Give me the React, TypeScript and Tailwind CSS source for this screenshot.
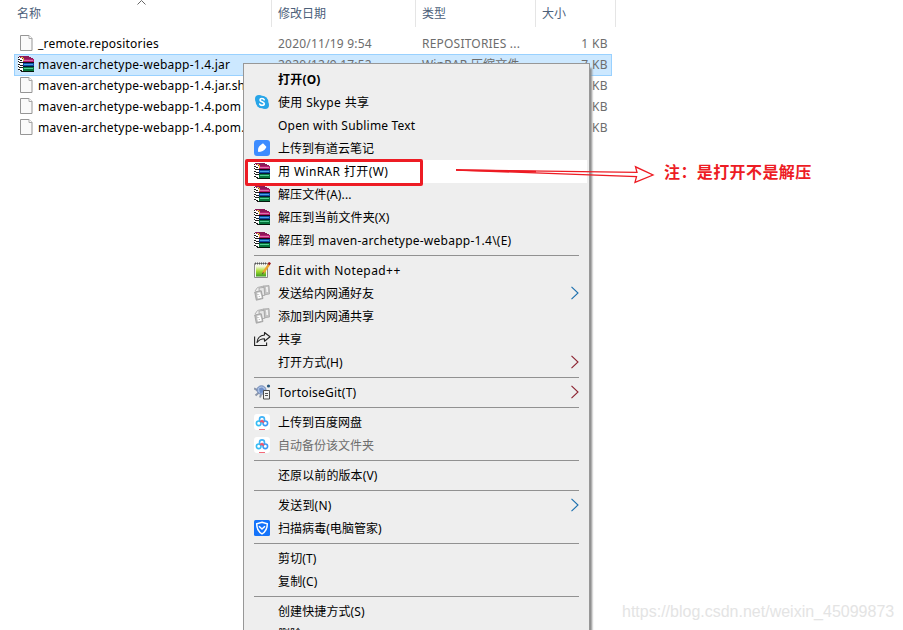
import { ReactNode } from "react";

type IconName =
  | "skype"
  | "youdao"
  | "rar"
  | "notepad"
  | "nwt"
  | "share"
  | "tortoise"
  | "baidu"
  | "guard";

type MenuEntry = {
  label: string;
  icon?: IconName;
  bold?: boolean;
  active?: boolean;
  disabled?: boolean;
  arrow?: "blue" | "red";
  spacing?: string;
};

const files = [
  { name: "_remote.repositories", date: "2020/11/19 9:54", type: "REPOSITORIES ...", size: "1 KB" },
  { name: "maven-archetype-webapp-1.4.jar", date: "2020/12/9 17:52", type: "WinRAR 压缩文件", size: "7 KB", selected: true },
  { name: "maven-archetype-webapp-1.4.jar.sha1", date: "", type: "", size: "1 KB" },
  { name: "maven-archetype-webapp-1.4.pom", date: "", type: "", size: "1 KB" },
  { name: "maven-archetype-webapp-1.4.pom.sha1", date: "", type: "", size: "1 KB" },
];

const menuGroups: MenuEntry[][] = [
  [
    { label: "打开(O)", bold: true, spacing: "tracking-[0.2px]" },
    { label: "使用 Skype 共享", icon: "skype", spacing: "tracking-[0.35px]" },
    { label: "Open with Sublime Text", spacing: "tracking-[0.19px]" },
    { label: "上传到有道云笔记", icon: "youdao" },
    { label: "用 WinRAR 打开(W)", icon: "rar", active: true, spacing: "tracking-[0.38px]" },
    { label: "解压文件(A)...", icon: "rar", spacing: "tracking-[0.1px]" },
    { label: "解压到当前文件夹(X)", icon: "rar", spacing: "tracking-[0.1px]" },
    { label: "解压到 maven-archetype-webapp-1.4\\(E)", icon: "rar", spacing: "tracking-[0.24px]" },
  ],
  [
    { label: "Edit with Notepad++", icon: "notepad", spacing: "tracking-[0.42px]" },
    { label: "发送给内网通好友", icon: "nwt", arrow: "blue" },
    { label: "添加到内网通共享", icon: "nwt" },
    { label: "共享", icon: "share" },
    { label: "打开方式(H)", arrow: "red", spacing: "tracking-[0.1px]" },
  ],
  [{ label: "TortoiseGit(T)", icon: "tortoise", arrow: "red", spacing: "tracking-[0.22px]" }],
  [
    { label: "上传到百度网盘", icon: "baidu" },
    { label: "自动备份该文件夹", icon: "baidu", disabled: true },
  ],
  [{ label: "还原以前的版本(V)", spacing: "tracking-[0.1px]" }],
  [
    { label: "发送到(N)", arrow: "blue", spacing: "tracking-[0.2px]" },
    { label: "扫描病毒(电脑管家)", icon: "guard", spacing: "tracking-[0.05px]" },
  ],
  [
    { label: "剪切(T)", spacing: "tracking-[0.15px]" },
    { label: "复制(C)", spacing: "tracking-[0.15px]" },
  ],
  [
    { label: "创建快捷方式(S)", spacing: "tracking-[0.1px]" },
    { label: "删除(D)" },
  ],
];

function RarIcon() {
  return (
    <svg width="16" height="16" viewBox="0 0 16 16" shapeRendering="crispEdges">
      {/* page edges of the three books */}
      <path d="M0 1h3v1h2v14H3v-1H1v-1H0z" fill="#fff" />
      <path
        d="M0 1h1v1H0zM0 3h2v1H0zM2 4h2v1H2zM0 5h1v1H0zM1 6h2v1H1zM3 6h2v1H3zM0 8h2v1H0zM2 9h3v1H2zM0 10h1v1H0zM1 11h2v1H1zM3 11h2v1H3zM0 13h2v1H0zM2 14h2v1H2zM3 15h2v1H3z"
        fill="#1c1c1c"
      />
      {/* covers */}
      <path d="M1 0h10v1h2v1h2v1H4V2H2V1H1z" fill="#8e1a58" />
      <path d="M5 3h11v3H5z" fill="#b61c70" />
      <path d="M6 4h9v1H6z" fill="#dc74a9" />
      <path d="M5 6h11v1H5z" fill="#1a0712" />
      <path d="M5 7h11v3H5z" fill="#0d4ca4" />
      <path d="M6 8h9v1H6z" fill="#45a4e6" />
      <path d="M5 10h11v1H5z" fill="#061735" />
      <path d="M5 11h11v4H5z" fill="#06763c" />
      <path d="M6 12h9v1H6z" fill="#55cf96" />
      <path d="M5 15h11v1H5z" fill="#04170b" />
      <path d="M3 1h2v1H3zM5 2h1v3H5z" fill="#e8c53c" />
    </svg>
  );
}

function FileIcon() {
  return (
    <svg width="13" height="17" viewBox="0 0 13 17">
      <path d="M.5 .5h8.500l3 3v12H.5z" fill="#fafafa" stroke="#969696" />
      <path d="M9 .5v3h3" fill="#fff" stroke="#a8a8a8" />
    </svg>
  );
}

function MenuIcon({ name }: { name: IconName }) {
  const drawings: Record<IconName, ReactNode> = {
    rar: <RarIcon />,
    skype: (
      <svg width="16" height="16" viewBox="0 0 16 16">
        <circle cx="8" cy="8" r="6.300" fill="#27a5e8" />
        <circle cx="5" cy="5" r="4" fill="#27a5e8" />
        <circle cx="11" cy="11" r="4" fill="#27a5e8" />
        <path d="M10.200 5.700C9.600 4.200 6 4.100 6 6c0 2 4.300 1.600 4.300 3.800 0 2-4 2-4.600.2" fill="none" stroke="#fff" strokeWidth="1.600" strokeLinecap="round" />
      </svg>
    ),
    youdao: (
      <svg width="16" height="16" viewBox="0 0 16 16">
        <rect width="16" height="16" rx="3" fill="#3d8cff" />
        <path d="M4.200 12c-.5-2.500 0-4.500 1.600-6.200L8.300 3.800c.5-.3.900-.3 1.200 0l2.600 2.700c.3.400.3.700 0 1.200-1.900 2.900-4.400 4.200-7.900 4.300z" fill="#fff" />
      </svg>
    ),
    notepad: (
      <svg width="17" height="16" viewBox="0 0 17 16">
        <defs>
          <linearGradient id="page" x1="0" y1="0" x2="0" y2="1">
            <stop offset=".1" stopColor="#f2f7d8" />
            <stop offset=".5" stopColor="#a9dd32" />
            <stop offset="1" stopColor="#3e9c22" />
          </linearGradient>
        </defs>
        <path d="M.5 1.500h13v14H.5z" fill="#f7f7f3" stroke="#8b8b8b" />
        <path d="M2 3.500h10v11H2z" fill="url(#page)" />
        <path d="M1 1.500h12" stroke="#555" strokeWidth="2" strokeDasharray="1 1" />
        <path d="M15 2.500L9 11" stroke="#eda42d" strokeWidth="2.200" />
        <path d="M9.300 10.300l-.8 1.900" stroke="#444" />
        <path d="M16 .5l-1.400 2.200" stroke="#9c1c20" strokeWidth="2.500" />
      </svg>
    ),
    nwt: (
      <svg width="16" height="16" viewBox="0 0 16 16">
        <path d="M9.500 1l5.500-.4.500 8.400-5 .8z" fill="#c4c4c4" stroke="#a6a6a6" strokeWidth=".8" />
        <path d="M5 3l5-.7.800 8-5.300.9z" fill="#e6e6e6" stroke="#a0a0a0" strokeWidth=".8" />
        <path d="M.7 7l6.500-1.300L9 13.500l-6.700 1.700z" fill="#bdbdbd" stroke="#999" strokeWidth=".8" />
        <path d="M3.300 8.500l2.500-.5.400 2-2.300.6.500 2.200 2.500-.6-.5-2.300M12 3l1-.3.200 4.300" fill="none" stroke="#fff" strokeWidth="1.300" />
        <path d="M1 6l2.500-3.500L10 1" fill="none" stroke="#b0b0b0" />
      </svg>
    ),
    share: (
      <svg width="17" height="16" viewBox="0 0 17 16">
        <path d="M.6 5.500v9h12v-3" fill="none" stroke="#222" strokeWidth="1.100" />
        <path d="M10.500 1.500l5.500 4.300-5.500 4.400V7.800C7 7.800 5 9 3 11.500c.3-4 3-7 7.500-7.500z" fill="none" stroke="#222" strokeWidth="1.100" strokeLinejoin="round" />
      </svg>
    ),
    tortoise: (
      <svg width="17" height="16" viewBox="0 0 17 16">
        <path d="M0 4.500l4 2M1.500 11.500l3.500-3M6 13.500l1-3" stroke="#8c97aa" strokeWidth="2" />
        <ellipse cx="7.500" cy="6" rx="4.500" ry="4.200" fill="#a9bfe2" stroke="#6f87b5" />
        <path d="M5 4.500l3-1 2.500 2-1 3-3.500.5z" fill="#6f8fc8" />
        <circle cx="14.500" cy="2" r="1.600" fill="#28587c" />
        <path d="M9.500 6.500h6v8.500h-6z" fill="#f2f2f2" stroke="#4c4c4c" />
        <path d="M11 9.500h3M11 11.500h3" stroke="#555" />
      </svg>
    ),
    baidu: (
      <svg width="16" height="16" viewBox="0 0 16 16">
        <rect width="16" height="16" rx="3" fill="#fff" />
        <circle cx="8" cy="5.400" r="2.500" fill="none" stroke="#3fb2f7" strokeWidth="1.600" />
        <circle cx="4.700" cy="9.300" r="2.300" fill="none" stroke="#35bdf5" strokeWidth="1.600" />
        <circle cx="11.300" cy="9.300" r="2.300" fill="none" stroke="#3b9af6" strokeWidth="1.600" />
        <path d="M6.200 8L8 6.700 9.900 8.500" fill="none" stroke="#f2566d" strokeWidth="1.900" />
        <path d="M5 15.500h6" stroke="#f46a7a" />
      </svg>
    ),
    guard: (
      <svg width="16" height="16" viewBox="0 0 16 16">
        <rect width="16" height="16" rx="1.500" fill="#1473fa" />
        <path d="M8 2.200l5.300 1.600c0 5-1 7.800-5.300 10-4.300-2.200-5.300-5-5.300-10z" fill="none" stroke="#fff" strokeWidth="1.500" />
        <path d="M5 6.200l3 2.800 3-2.800" fill="none" stroke="#fff" strokeWidth="1.500" />
      </svg>
    ),
  };

  return drawings[name];
}

function MenuRow({ entry }: { entry: MenuEntry }) {
  return (
    <div
      className={`flex h-[23px] items-center pr-2 pl-2 ${entry.active ? "bg-white" : ""} ${
        entry.disabled ? "text-[#6d6d6d]" : "text-black"
      }`}
    >
      <span className="flex w-6 shrink-0 pb-px">{entry.icon && <MenuIcon name={entry.icon} />}</span>
      <span className={`flex-1 ${entry.bold ? "font-bold" : ""} ${entry.spacing ?? ""}`}>
        {entry.label}
      </span>
      {entry.arrow && (
        <svg width="9" height="14" viewBox="0 0 9 14" className="mb-[2px]">
          <path
            d="M1.500 .8L8 7l-6.500 6.200"
            fill="none"
            stroke={entry.arrow === "blue" ? "#1a6fae" : "#8c2330"}
            strokeWidth="1.100"
          />
        </svg>
      )}
    </div>
  );
}

function ContextMenu() {
  return (
    <div className="absolute top-[63px] left-[243px] w-[347px] border border-[#979797] bg-[#eeeeee] px-0.5 py-1 shadow-[3px_4px_2px_-1px_#8a8a8a]">
      {menuGroups.map((group, index) => (
        <div key={index}>
          {index > 0 && <div className="mx-2 my-[3px] h-px bg-[#919191]" />}
          {group.map((entry) => (
            <MenuRow key={entry.label} entry={entry} />
          ))}
        </div>
      ))}
    </div>
  );
}

function FileList() {
  return (
    <div className="w-[616px]">
      <div className="flex h-[27px] text-[#4c607a]">
        <div className="relative w-[272px] border-r border-[#e5e5e5] pt-[5px] pl-[17px]">
          名称
          <svg width="10" height="6" viewBox="0 0 10 6" className="absolute top-0 left-[137px]">
            <path d="M.5 4.500L4.500.5l4 4" fill="none" stroke="#666" />
          </svg>
        </div>
        <div className="w-36 border-r border-[#e5e5e5] pt-[5px] pl-1.5">修改日期</div>
        <div className="w-[120px] border-r border-[#e5e5e5] pt-[5px] pl-1.5">类型</div>
        <div className="w-20 border-r border-[#e5e5e5] pt-[5px] pl-1.5">大小</div>
      </div>

      <div className="mt-1.5 mr-1 ml-3.5">
        {files.map((file) => (
          <div
            key={file.name}
            className={`flex items-center tracking-[0.21px] ${
              file.selected
                ? "-mb-px h-[22px] bg-[#cce8ff] pb-px outline outline-[#99d1ff] -outline-offset-1"
                : "h-[21px]"
            }`}
          >
            <span className="flex w-6 shrink-0 justify-center pb-px">
              {file.selected ? <RarIcon /> : <FileIcon />}
            </span>
            <span className="w-60 shrink-0 text-black">{file.name}</span>
            <span className="w-36 shrink-0 text-[#6d6d6d]">{file.date}</span>
            <span className="w-[110px] shrink-0 text-[#6d6d6d]">{file.type}</span>
            <span className="flex-1 pr-1 text-right tracking-[0.4px] text-[#6d6d6d]">{file.size}</span>
          </div>
        ))}
      </div>
    </div>
  );
}

export default function App() {
  return (
    <div className="relative h-[630px] w-[903px] overflow-hidden bg-white font-['Noto_Sans','Noto_Sans_CJK_SC',sans-serif] text-[12px] leading-[18px] whitespace-nowrap">
      <FileList />
      <ContextMenu />
      <div className="absolute top-[159px] left-[245px] h-[27px] w-[178px] rounded-[2px] border-3 border-[#ed1c24]" />
      <svg width="202" height="24" viewBox="0 0 202 24" className="absolute top-[162px] left-[454px]">
        <path
          d="M2 8l181 2.300-1.500-5.500 17.500 8.200-18 7.300 1.500-5.600z"
          fill="none"
          stroke="#ed1c24"
          strokeWidth="1.300"
        />
        <path d="M2 8l80 1.600" stroke="#ed1c24" strokeWidth="1.600" />
      </svg>
      <p className="absolute top-[160px] left-[664px] text-[16px] leading-6 font-bold tracking-[0.4px] text-[#ed1c24]">
        注：是打开不是解压
      </p>
      <p className="absolute top-[602px] left-[622px] font-['Liberation_Sans',sans-serif] text-[16px] leading-5 text-[#e4e4e4]">
        https://blog.csdn.net/weixin_45099873
      </p>
    </div>
  );
}
